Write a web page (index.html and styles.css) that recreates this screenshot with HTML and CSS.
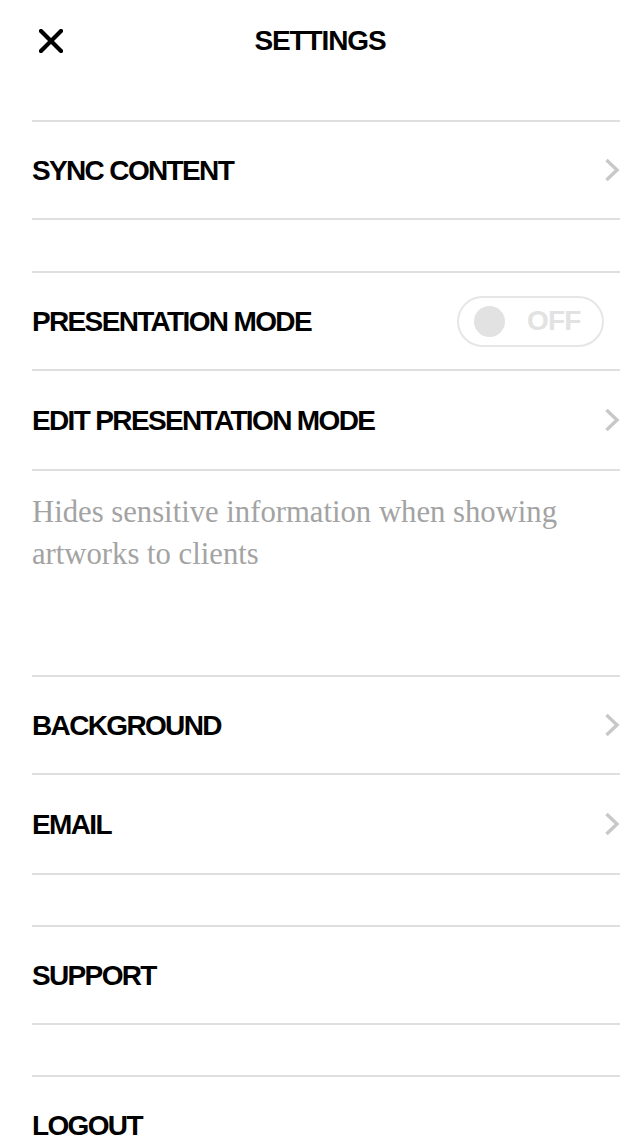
FILE: index.html
```html
<!DOCTYPE html>
<html lang="en">
<head>
<meta charset="utf-8">
<title>Settings</title>
<link rel="stylesheet" href="styles.css">
</head>
<body>
<header class="topbar">
  <button class="close" aria-label="Close">
    <svg viewBox="0 0 24 24" width="24" height="24"><path d="M2 2 L22 22 M22 2 L2 22" stroke="#000" stroke-width="4.2" stroke-linecap="square" fill="none"/></svg>
  </button>
  <h1 class="title">SETTINGS</h1>
  <span class="spacer"></span>
</header>

<main class="list">
  <section class="group">
    <div class="row">
      <span class="label">SYNC CONTENT</span>
      <svg class="chev" viewBox="0 0 16 24" width="16" height="24"><path d="M2.5 2 L13 12 L2.5 22" stroke="#c8c8c8" stroke-width="3.4" fill="none"/></svg>
    </div>
  </section>

  <section class="group">
    <div class="row">
      <span class="label">PRESENTATION MODE</span>
      <span class="toggle"><span class="knob"></span><span class="toggle-text">OFF</span></span>
    </div>
    <div class="row">
      <span class="label">EDIT PRESENTATION MODE</span>
      <svg class="chev" viewBox="0 0 16 24" width="16" height="24"><path d="M2.5 2 L13 12 L2.5 22" stroke="#c8c8c8" stroke-width="3.4" fill="none"/></svg>
    </div>
  </section>

  <p class="note">Hides sensitive information when showing artworks to clients</p>

  <section class="group">
    <div class="row">
      <span class="label">BACKGROUND</span>
      <svg class="chev" viewBox="0 0 16 24" width="16" height="24"><path d="M2.5 2 L13 12 L2.5 22" stroke="#c8c8c8" stroke-width="3.4" fill="none"/></svg>
    </div>
    <div class="row">
      <span class="label">EMAIL</span>
      <svg class="chev" viewBox="0 0 16 24" width="16" height="24"><path d="M2.5 2 L13 12 L2.5 22" stroke="#c8c8c8" stroke-width="3.4" fill="none"/></svg>
    </div>
  </section>

  <section class="group">
    <div class="row">
      <span class="label">SUPPORT</span>
    </div>
  </section>

  <section class="group">
    <div class="row">
      <span class="label">LOGOUT</span>
    </div>
  </section>
</main>
</body>
</html>
```

FILE: styles.css
```css
* { box-sizing: border-box; }

html, body {
  margin: 0;
  padding: 0;
  background: #fff;
}

body {
  width: 640px;
  height: 1136px;
  overflow: hidden;
  font-family: "Liberation Sans", Arial, sans-serif;
  color: #000;
}

.topbar {
  height: 120px;
  display: grid;
  grid-template-columns: 1fr auto 1fr;
  align-items: start;
  padding-top: 29px;
}

.close {
  justify-self: start;
  margin-left: 39px;
  padding: 0;
  border: 0;
  background: none;
  width: 24px;
  height: 24px;
  display: block;
}

.close svg { display: block; }

.title {
  margin: 0;
  font-size: 28px;
  font-weight: 700;
  letter-spacing: -1.1px;
  line-height: 24px;
}

.list {
  margin: 0 20px 0 32px;
}

.group {
  border-top: 2px solid #dfdfdf;
  margin-bottom: 50px;
}

.group:first-child {
  margin-bottom: 51px;
}

.row {
  height: 98px;
  border-bottom: 2px solid #dfdfdf;
  display: flex;
  align-items: center;
  justify-content: space-between;
}

.row + .row {
  height: 100px;
}

.label {
  font-size: 28px;
  font-weight: 700;
  letter-spacing: -1.65px;
  line-height: 1;
  padding-top: 1px;
}

.chev {
  display: block;
}

.toggle {
  width: 147px;
  height: 51px;
  border: 2px solid #e6e6e6;
  border-radius: 26px;
  margin-right: 16px;
  display: flex;
  align-items: center;
  padding-left: 15px;
  gap: 22px;
}

.knob {
  width: 31px;
  height: 31px;
  border-radius: 50%;
  background: #e2e2e2;
  flex: none;
}

.toggle-text {
  font-size: 28px;
  font-weight: 700;
  color: #e2e2e2;
  letter-spacing: -0.8px;
  line-height: 1;
}

.note {
  margin: 0;
  height: 204px;
  margin-top: -50px;
  padding-top: 20px;
  padding-right: 20px;
  font-family: "Liberation Serif", "Times New Roman", serif;
  font-size: 30.7px;
  line-height: 42px;
  color: #a3a3a3;
}
```
